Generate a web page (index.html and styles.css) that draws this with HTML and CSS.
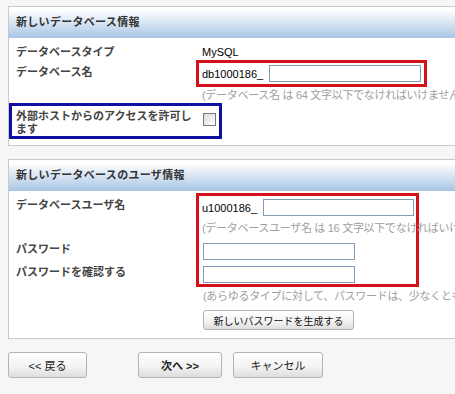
FILE: index.html
```html
<!DOCTYPE html>
<html lang="ja">
<head>
    <meta charset="UTF-8">
    <meta name="viewport" content="width=device-width, initial-scale=1.0">
    <title>新しいデータベース</title>
    <link rel="stylesheet" href="styles.css">
</head>
<body>
    <div class="page">
        <!-- Database info -->
        <section class="panel">
            <h2 class="panel-title">新しいデータベース情報</h2>
            <div class="panel-body">
                <div class="row row-type">
                    <span class="label">データベースタイプ</span>
                    <span class="value">MySQL</span>
                </div>
                <div class="row row-name">
                    <label class="label" for="dbName">データベース名</label>
                    <div class="mark-red name-box">
                        <span class="prefix">db1000186_</span>
                        <input class="text-input name-input" id="dbName" type="text">
                    </div>
                </div>
                <div class="hint hint-name">(データベース名 は 64 文字以下でなければいけません)</div>
                <div class="mark-blue remote-box">
                    <label class="remote-label" for="remote">外部ホストからのアクセスを許可します</label>
                    <input class="check" id="remote" type="checkbox">
                </div>
            </div>
        </section>

        <!-- Database user info -->
        <section class="panel panel-user">
            <h2 class="panel-title">新しいデータベースのユーザ情報</h2>
            <div class="panel-body">
                <div class="user-grid">
                    <div class="user-labels">
                        <label class="label label-user" for="dbUser">データベースユーザ名</label>
                        <label class="label label-pass" for="pass">パスワード</label>
                        <label class="label label-confirm" for="pass2">パスワードを確認する</label>
                    </div>
                    <div class="mark-red user-box">
                        <div class="user-row">
                            <span class="prefix">u1000186_</span>
                            <input class="text-input user-input" id="dbUser" type="text">
                        </div>
                        <div class="hint hint-user">(データベースユーザ名 は 16 文字以下でなければいけません)</div>
                        <input class="text-input pass-input" id="pass" type="password">
                        <input class="text-input pass-input pass-confirm" id="pass2" type="password">
                    </div>
                </div>
                <div class="hint hint-pass">(あらゆるタイプに対して、パスワードは、少なくとも 6 (32 文字以下) 文字以上でなければいけません)</div>
                <button class="btn btn-generate" type="button">新しいパスワードを生成する</button>
            </div>
        </section>

        <div class="actions">
            <button class="btn btn-back" type="button">&lt;&lt; 戻る</button>
            <button class="btn btn-next" type="button">次へ &gt;&gt;</button>
            <button class="btn btn-cancel" type="button">キャンセル</button>
        </div>
    </div>
</body>
</html>
```

FILE: styles.css
```css
html, body {
    margin: 0;
    padding: 0;
    background: #f6f6f6;
    overflow: hidden;
}

body {
    font-family: 'Liberation Sans', 'Noto Sans CJK JP', sans-serif;
    font-size: 11px;
    color: #000;
}

.page {
    padding: 6px 0 0 8px;
    width: 480px;
}

/* Panels */
.panel {
    background: #fff;
    border: 1px solid #c9c9c9;
    border-right: none;
    padding-bottom: 6px;
}

.panel-user {
    margin-top: 13px;
    padding-bottom: 8px;
}

.panel-title {
    margin: 0;
    height: 31px;
    line-height: 31px;
    padding-left: 7px;
    font-size: 11px;
    font-weight: bold;
    color: #333;
    letter-spacing: 0.3px;
    background: linear-gradient(#ffffff 10%, #a8c5e5 100%);
}

/* Rows */
.row {
    display: flex;
    align-items: flex-start;
}

.label {
    display: block;
    width: 187px;
    box-sizing: border-box;
    padding-left: 7px;
    line-height: 16px;
    font-weight: bold;
    color: #444;
    white-space: nowrap;
}

.row-type {
    margin-top: 6px;
    height: 16px;
    line-height: 17px;
}

.value {
    padding-left: 6px;
}

.row-name .label {
    margin-top: 4px;
}

.mark-red {
    border: 3px solid #d5121b;
    box-sizing: border-box;
}

.mark-blue {
    border: 3px solid #1010a0;
    box-sizing: border-box;
}

.name-box {
    width: 231px;
    height: 27px;
    padding: 2px 3px;
    display: flex;
    align-items: center;
    justify-content: space-between;
}

.text-input {
    height: 17px;
    box-sizing: border-box;
    border: 1px solid #7f9db9;
    margin: 0;
    padding: 0 2px;
    background: #fff;
    font: inherit;
}

.name-input {
    width: 152px;
}

.hint {
    color: #a0a0a0;
    white-space: nowrap;
    letter-spacing: -0.3px;
}

.hint-name {
    height: 16px;
    line-height: 16px;
    padding-left: 193px;
}

/* Remote access box */
.remote-box {
    width: 213px;
    height: 36px;
    padding: 4px 0 0 4px;
    display: flex;
    align-items: flex-start;
}

.remote-label {
    width: 177px;
    line-height: 13px;
    font-weight: bold;
    color: #444;
}

.check {
    appearance: none;
    width: 13px;
    height: 13px;
    margin: 3px 0 0 10px;
    border: 1px solid #7a7a7a;
    background: linear-gradient(135deg, #dcdcd7, #ffffff);
}

/* User section */
.user-grid {
    display: flex;
    align-items: flex-start;
}

.user-labels {
    padding-top: 6px;
}

.label-pass {
    margin-top: 28px;
}

.label-confirm {
    margin-top: 7px;
}

.user-box {
    margin-top: 2px;
    width: 223px;
    padding: 3px 2px 1px 3px;
    display: flex;
    flex-direction: column;
    align-items: flex-start;
}

.user-row {
    width: 100%;
    display: flex;
    justify-content: space-between;
    align-items: center;
}

.user-input {
    width: 151px;
}

.hint-user {
    height: 27px;
    line-height: 25px;
}

.pass-input {
    width: 152px;
    margin-left: 1px;
}

.pass-confirm {
    margin-top: 6px;
}

.hint-pass {
    height: 18px;
    line-height: 18px;
    padding-left: 194px;
}

/* Buttons */
.btn {
    font: inherit;
    color: #222;
    border: 1px solid #b4b4b4;
    border-radius: 3px;
    background: linear-gradient(#ffffff 0%, #f4f4f4 55%, #dddddd 100%);
    padding: 0;
    cursor: pointer;
}

.btn-generate {
    display: block;
    margin: 5px 0 0 194px;
    width: 151px;
    height: 20px;
    font-size: 10px;
    color: #111;
}

.actions {
    display: flex;
    margin-top: 13px;
}

.actions .btn {
    height: 26px;
}

.btn-back {
    width: 79px;
}

.btn-next {
    width: 84px;
    margin-left: 51px;
    font-weight: bold;
}

.btn-cancel {
    width: 90px;
    margin-left: 11px;
}
```
